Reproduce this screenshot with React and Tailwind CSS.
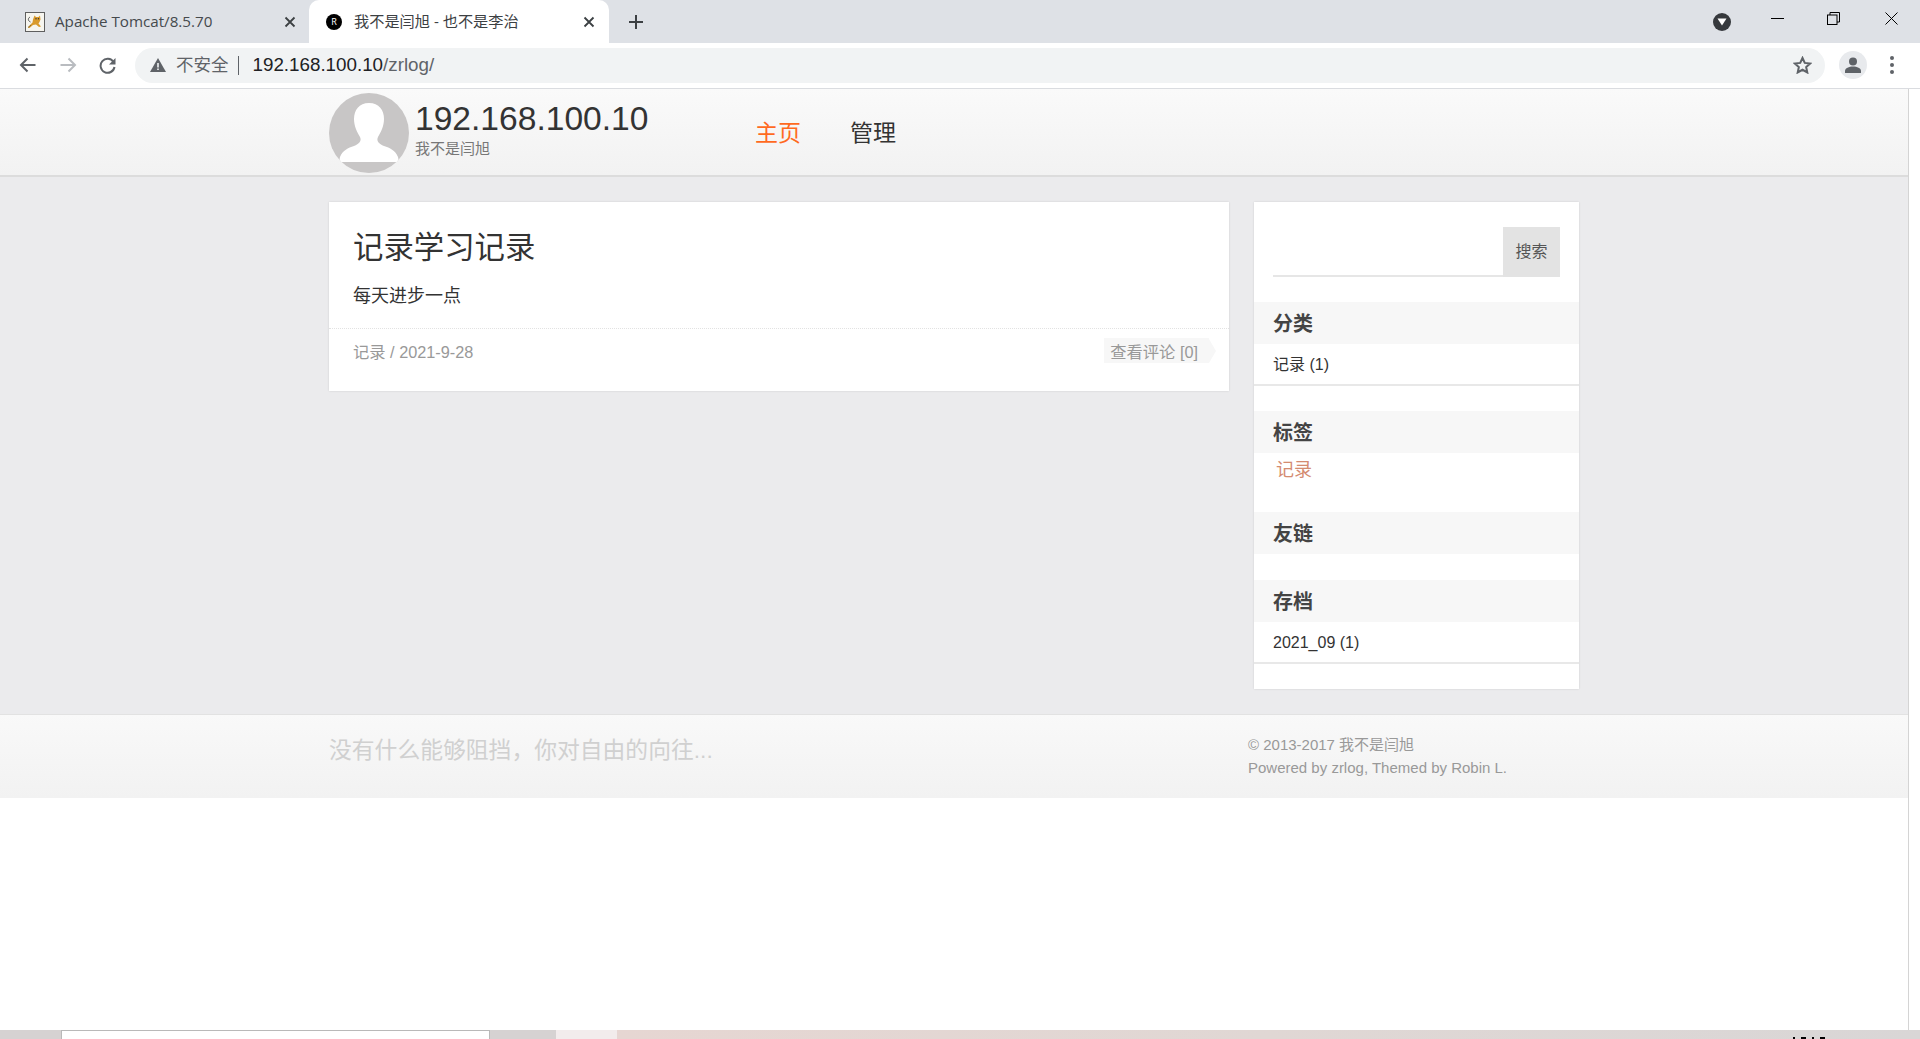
import React from "react";

const pageFont = { fontFamily: '"Liberation Sans", "Noto Sans CJK SC", sans-serif' };

const TomcatIcon = () => (
  <svg width="20" height="20" viewBox="0 0 20 20">
    <rect x="0.5" y="0.5" width="19" height="19" fill="#f6f5ef" stroke="#5f5f5f" />
    <path d="M9.500 3.500l1.500 1.500h2.500l1.500-1.500.5 4-1 2.500-1 1.500 2.500 3-2 .5-3-2.500-3 .5-3.500 3-1.500-.5 3-3.500 1.500-1.500.5-3z" fill="#d99a2b" />
    <path d="M5.500 10C3 9 2.500 6.500 5 5" fill="none" stroke="#555" strokeWidth="1" />
    <path d="M3 15.500l3-2.500" fill="none" stroke="#8a6a2a" strokeWidth="1" />
    <circle cx="11" cy="6.800" r="0.7" fill="#333" />
    <circle cx="13.500" cy="6.800" r="0.7" fill="#333" />
  </svg>
);

const CloseIcon = () => (
  <svg width="12" height="12" viewBox="0 0 12 12" fill="none" stroke="#3c4043" strokeWidth="1.8">
    <path d="M1.500 1.500l9 9M10.500 1.500l-9 9" />
  </svg>
);

const Avatar = () => (
  <svg width="80" height="80" viewBox="0 0 80 80" className="shrink-0">
    <defs>
      <clipPath id="avatar-clip">
        <circle cx="40" cy="40" r="40" />
      </clipPath>
    </defs>
    <g clipPath="url(#avatar-clip)">
      <rect width="80" height="80" fill="#c8c6c6" />
      <path
        d="M40 10c-10 0-15 7-15 16 0 7 3 13 6 18 2 4-1 7-6 9-6 2-11 4-14 11l-1 5h60l-1-5c-3-7-8-9-14-11-5-2-8-5-6-9 3-5 6-11 6-18 0-9-5-16-15-16z"
        fill="#ffffff"
      />
    </g>
  </svg>
);

const Tabs = () => (
  <div className="flex h-[43px] shrink-0 items-stretch bg-[#dee1e6]" style={{ fontFamily: '"Open Sans", "Noto Sans CJK SC", sans-serif' }}>
    <div className="flex w-[309px] items-center pl-[25px] pr-[13px] text-[#45494d]">
      <TomcatIcon />
      <span className="ml-[10px] flex-1 text-[15.2px]">Apache Tomcat/8.5.70</span>
      <CloseIcon />
    </div>
    <div className="flex w-[300px] items-center rounded-t-[10px] bg-white pl-[17px] pr-[14px] text-[#3c4043]">
      <div className="flex h-4 w-4 items-center justify-center rounded-full bg-black text-[9px] text-white">R</div>
      <span className="ml-[12px] flex-1 text-[15.2px]">我不是闫旭 - 也不是李治</span>
      <CloseIcon />
    </div>
    <div className="ml-[20px] flex items-center">
      <svg width="14" height="14" viewBox="0 0 14 14" stroke="#3c4043" strokeWidth="2">
        <path d="M7 0v14M0 7h14" />
      </svg>
    </div>
    <div className="flex-1" />
    <div className="mt-[13px] mr-[28px] flex h-[18px] w-[18px] items-center justify-center rounded-full bg-[#36393d]">
      <svg width="10" height="8" viewBox="0 0 10 8">
        <path d="M0.500 0.500h9L5 7.500z" fill="#fff" />
      </svg>
    </div>
    <div className="flex w-[161px] items-start pt-[12px] pl-[12px]">
      <svg width="13" height="13" viewBox="0 0 13 13" className="mr-[43px]" stroke="#000" fill="none">
        <path d="M0 6.500h13" />
      </svg>
      <svg width="13" height="13" viewBox="0 0 13 13" className="mr-[45px]" stroke="#000" fill="none">
        <rect x="0.500" y="3" width="9.500" height="9.500" />
        <path d="M3 3V0.500h9.500V10H10" />
      </svg>
      <svg width="13" height="13" viewBox="0 0 13 13" stroke="#000" fill="none">
        <path d="M0.500 0.500l12 12M12.500 0.500l-12 12" />
      </svg>
    </div>
  </div>
);

const Toolbar = () => (
  <div className="flex h-[46px] shrink-0 items-center border-b border-[#dadce0] bg-white pb-[1px]" style={pageFont}>
    <div className="ml-[19px] flex w-[116px] items-center">
      <svg width="17" height="16" viewBox="0 0 17 16" fill="none" stroke="#5f6368" strokeWidth="2" className="mr-[23.5px]">
        <path d="M16.500 8H2M8.500 1.500L2 8l6.500 6.500" />
      </svg>
      <svg width="17" height="16" viewBox="0 0 17 16" fill="none" stroke="#b9bcc0" strokeWidth="2" className="mr-[22.5px]">
        <path d="M0.500 8H15M8.500 1.500L15 8l-6.500 6.500" />
      </svg>
      <svg width="17" height="17" viewBox="0 0 17 17" fill="none">
        <path d="M14.500 5A7 7 0 1 0 15.500 10" stroke="#5f6368" strokeWidth="2" />
        <path d="M16.500 1v6.500H10z" fill="#5f6368" />
      </svg>
    </div>
    <div className="flex h-[35px] w-[1690px] items-center rounded-full bg-[#f1f3f4] pl-[15px] pr-[13px]">
      <svg width="16" height="14" viewBox="0 0 16 14">
        <path d="M8 0l8 14H0z" fill="#5f6368" />
        <path d="M7.200 5h1.600v4.500H7.200zM7.200 10.500h1.600V12H7.200z" fill="#f1f3f4" />
      </svg>
      <span className="ml-[10px] text-[17.5px] text-[#5f6368]">不安全</span>
      <span className="ml-[9px] h-[19px] w-px bg-[#5f6368]" />
      <span className="ml-[14px] text-[18.8px] text-[#202124]">192.168.100.10<span className="text-[#5f6368]">/zrlog/</span></span>
      <div className="flex-1" />
      <svg width="19" height="18" viewBox="0 0 24 23" fill="none" stroke="#5f6368" strokeWidth="2.6">
        <path d="M12 2.500l2.900 6.300 6.900.8-5.100 4.600 1.400 6.800-6.100-3.400-6.100 3.400 1.400-6.800-5.100-4.600 6.900-.8z" />
      </svg>
    </div>
    <div className="ml-[14px] flex h-[28px] w-[28px] items-center justify-center rounded-full bg-[#e8eaed]">
      <svg width="16" height="16" viewBox="0 0 16 16" fill="#5f6368">
        <circle cx="8" cy="4.500" r="4" />
        <path d="M0 16v-2c0-3 4-4.500 8-4.500s8 1.500 8 4.500v2z" />
      </svg>
    </div>
    <div className="ml-[23px] flex flex-col gap-[3px]">
      <span className="h-[4px] w-[4px] rounded-full bg-[#5f6368]" />
      <span className="h-[4px] w-[4px] rounded-full bg-[#5f6368]" />
      <span className="h-[4px] w-[4px] rounded-full bg-[#5f6368]" />
    </div>
  </div>
);

const SideSection = ({ title, children, className = "" }) => (
  <div className={className}>
    <h3 className="flex h-[42px] items-center bg-[#f7f7f7] pt-[1px] pl-[19px] text-[20px] font-bold text-[#444]">{title}</h3>
    {children}
  </div>
);

const SideItem = ({ children }) => (
  <div className="flex h-[42px] items-center border-b-2 border-[#e8e8e8] pt-[2px] pl-[19px] text-[16px] text-[#333]">{children}</div>
);

const Sidebar = () => (
  <aside className="flex h-[487px] w-[325px] flex-col bg-white shadow-[0_0_2px_rgba(0,0,0,0.12)]">
    <div className="flex h-[100px] shrink-0 pt-[25px] pr-[19px] pl-[19px]">
      <div className="h-[50px] flex-1 border-b-2 border-[#e6e6e6]" />
      <button className="flex h-[50px] w-[57px] items-center justify-center bg-[#e3e3e3] text-[16px] text-[#555]">搜索</button>
    </div>
    <SideSection title="分类">
      <SideItem>记录 (1)</SideItem>
    </SideSection>
    <SideSection title="标签" className="mt-[25px]">
      <div className="h-[59px] pl-[22px] text-[18px] leading-[34px] text-[#d48b70]">记录</div>
    </SideSection>
    <SideSection title="友链">
      <div className="h-[26px]" />
    </SideSection>
    <SideSection title="存档">
      <SideItem>2021_09 (1)</SideItem>
    </SideSection>
  </aside>
);

const PostCard = () => (
  <article className="h-[189px] w-[900px] bg-white shadow-[0_0_2px_rgba(0,0,0,0.12)]">
    <div className="h-[127px] border-b border-dotted border-[#e2e2e2] pl-[24px]">
      <h1 className="pt-[24px] text-[30.4px] leading-[42px] text-[#333]">记录学习记录</h1>
      <p className="mt-[16px] text-[18px] leading-[24px] text-[#333]">每天进步一点</p>
    </div>
    <div className="flex items-start justify-between pt-[7px] pr-[13px] pl-[24px] text-[16.3px] text-[#999]">
      <span className="leading-[32px]">记录 / 2021-9-28</span>
      <div className="mt-[2px] flex h-[25px] items-center">
        <span className="flex h-[25px] items-center bg-[#f7f7f7] pt-[4px] pr-[11px] pl-[6px] leading-none">查看评论 [0]</span>
        <span className="h-0 w-0 border-y-[12.5px] border-l-[7px] border-y-transparent border-l-[#f7f7f7]" />
      </div>
    </div>
  </article>
);

const Page = () => (
  <div className="flex min-w-0 flex-1 flex-col bg-white" style={pageFont}>
    <header className="h-[88px] border-b-2 border-[#dcdcdc] bg-gradient-to-b from-[#fafafa] to-[#f2f2f2] pt-[2px]">
      <div className="mx-auto flex h-full w-[1250px] items-center">
        <Avatar />
        <div className="-mt-[8px] ml-[6px] w-[340px]">
          <div className="text-[33.6px] leading-[38px] text-[#333]">192.168.100.10</div>
          <div className="mt-[2px] text-[15px] leading-[18px] text-[#777]">我不是闫旭</div>
        </div>
        <nav className="flex gap-[49px] text-[23px]">
          <a className="text-[#ff6a1f]">主页</a>
          <a className="text-[#333]">管理</a>
        </nav>
      </div>
    </header>
    <main className="bg-[#ebebed] py-[25px]">
      <div className="mx-auto flex w-[1250px] items-start justify-between">
        <PostCard />
        <Sidebar />
      </div>
    </main>
    <footer className="h-[84px] border-t border-[#e2e2e2] bg-gradient-to-b from-[#f9f9f9] to-[#f2f2f2]">
      <div className="mx-auto flex h-full w-[1250px] items-start justify-between">
        <div className="pt-[19px] text-[22.8px] leading-[32px] text-[#d0d0d0]">没有什么能够阻挡，你对自由的向往...</div>
        <div className="w-[331px] pt-[18px] text-[15px] leading-[23px] text-[#999]">
          <div>© 2013-2017 我不是闫旭</div>
          <div>Powered by zrlog, Themed by Robin L.</div>
        </div>
      </div>
    </footer>
    <div className="flex-1" />
  </div>
);

const Taskbar = () => (
  <div className="flex h-[9px] shrink-0 bg-[#d6d2d2]">
    <div className="ml-[61px] w-[429px] border-t border-l border-r border-[#b9b9b9] bg-white" />
    <div className="ml-[66px] w-[61px] bg-[#f2ecec]" />
    <div className="flex flex-1 items-end justify-end gap-[6px] bg-gradient-to-r from-[#e6d6d2] via-[#e0d7d4] to-[#d9d6d6] pr-[95px]">
      <span className="h-[2px] w-[2px] bg-black" />
      <span className="h-[2px] w-[5px] bg-black" />
      <span className="h-[2px] w-[2px] bg-black" />
      <span className="h-[2px] w-[5px] bg-black" />
    </div>
  </div>
);

export default function App() {
  return (
    <div className="flex h-[1039px] w-full flex-col overflow-hidden bg-white">
      <Tabs />
      <Toolbar />
      <div className="flex min-h-0 flex-1">
        <Page />
        <div className="w-[12px] shrink-0 border-l border-[#d4d4d4] bg-white" />
      </div>
      <Taskbar />
    </div>
  );
}
